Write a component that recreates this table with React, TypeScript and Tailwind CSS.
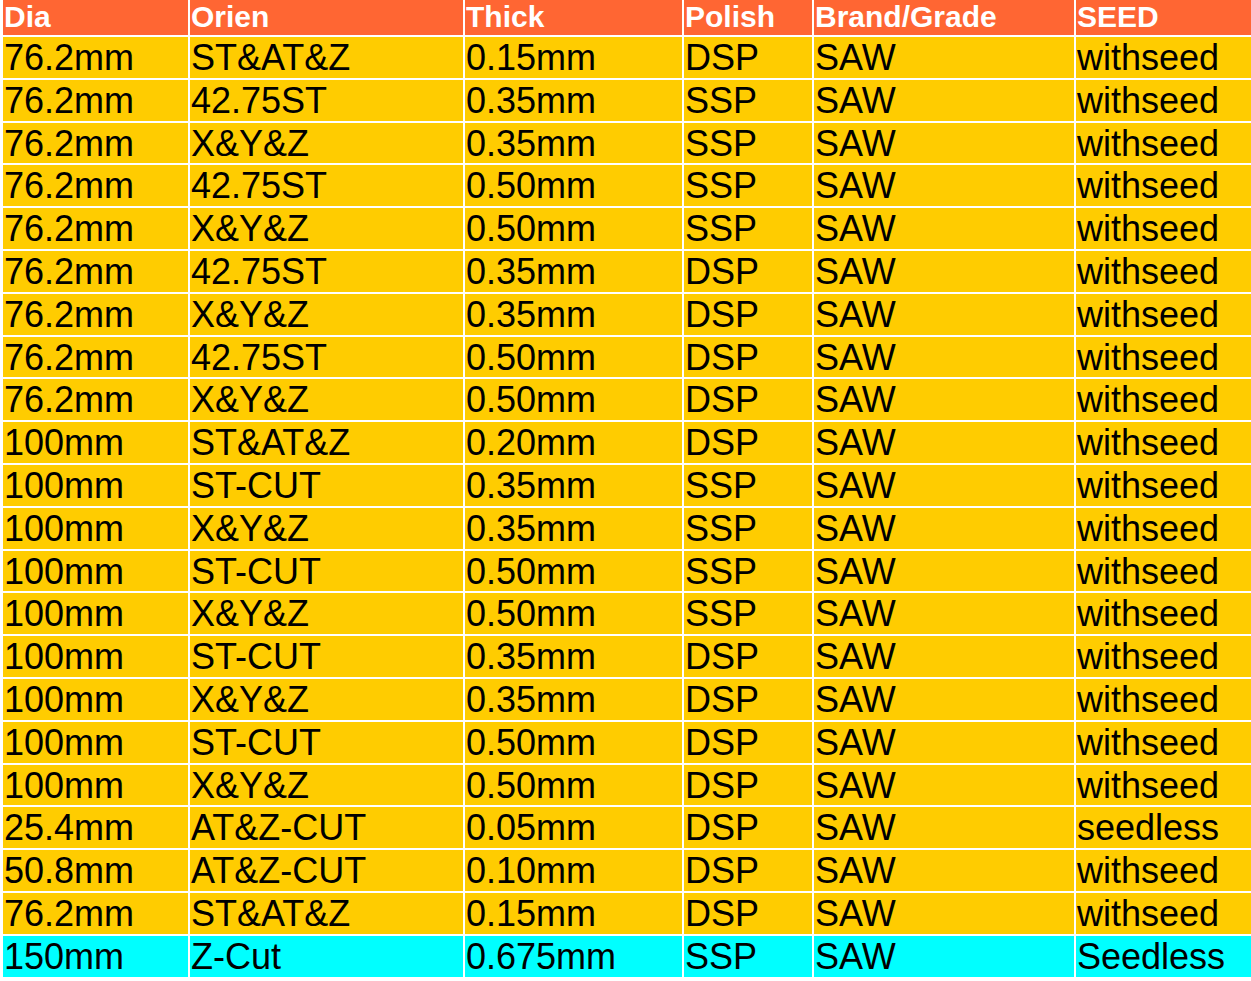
const headers = ["Dia", "Orien", "Thick", "Polish", "Brand/Grade", "SEED"];

const rows: string[][] = [
  ["76.2mm", "ST&AT&Z", "0.15mm", "DSP", "SAW", "withseed"],
  ["76.2mm", "42.75ST", "0.35mm", "SSP", "SAW", "withseed"],
  ["76.2mm", "X&Y&Z", "0.35mm", "SSP", "SAW", "withseed"],
  ["76.2mm", "42.75ST", "0.50mm", "SSP", "SAW", "withseed"],
  ["76.2mm", "X&Y&Z", "0.50mm", "SSP", "SAW", "withseed"],
  ["76.2mm", "42.75ST", "0.35mm", "DSP", "SAW", "withseed"],
  ["76.2mm", "X&Y&Z", "0.35mm", "DSP", "SAW", "withseed"],
  ["76.2mm", "42.75ST", "0.50mm", "DSP", "SAW", "withseed"],
  ["76.2mm", "X&Y&Z", "0.50mm", "DSP", "SAW", "withseed"],
  ["100mm", "ST&AT&Z", "0.20mm", "DSP", "SAW", "withseed"],
  ["100mm", "ST-CUT", "0.35mm", "SSP", "SAW", "withseed"],
  ["100mm", "X&Y&Z", "0.35mm", "SSP", "SAW", "withseed"],
  ["100mm", "ST-CUT", "0.50mm", "SSP", "SAW", "withseed"],
  ["100mm", "X&Y&Z", "0.50mm", "SSP", "SAW", "withseed"],
  ["100mm", "ST-CUT", "0.35mm", "DSP", "SAW", "withseed"],
  ["100mm", "X&Y&Z", "0.35mm", "DSP", "SAW", "withseed"],
  ["100mm", "ST-CUT", "0.50mm", "DSP", "SAW", "withseed"],
  ["100mm", "X&Y&Z", "0.50mm", "DSP", "SAW", "withseed"],
  ["25.4mm", "AT&Z-CUT", "0.05mm", "DSP", "SAW", "seedless"],
  ["50.8mm", "AT&Z-CUT", "0.10mm", "DSP", "SAW", "withseed"],
  ["76.2mm", "ST&AT&Z", "0.15mm", "DSP", "SAW", "withseed"],
];

const lastRow = ["150mm", "Z-Cut", "0.675mm", "SSP", "SAW", "Seedless"];

export default function App() {
  return (
    <div className="w-[1251px] h-[981px] overflow-hidden bg-white font-['Liberation_Sans',Arial,sans-serif]">
      <div className="grid grid-cols-[185px_273px_217px_128px_260px_200px] gap-[2px] pl-[3px]">
        {headers.map((h) => (
          <div key={h} className="h-[35px] bg-[#ff6633] pl-[1px] text-[30px] font-bold leading-[34px] text-white whitespace-nowrap">
            {h}
          </div>
        ))}
        {rows.map((r, i) =>
          r.map((c, j) => (
            <div key={`${i}-${j}`} className="h-[40.8px] bg-[#ffcc00] pl-[1px] text-[36px] leading-[41px] text-black whitespace-nowrap">
              {c}
            </div>
          ))
        )}
        {lastRow.map((c, j) => (
          <div key={`last-${j}`} className="h-[40.8px] bg-[#00ffff] pl-[1px] text-[36px] leading-[41px] text-black whitespace-nowrap">
            {c}
          </div>
        ))}
      </div>
    </div>
  );
}
